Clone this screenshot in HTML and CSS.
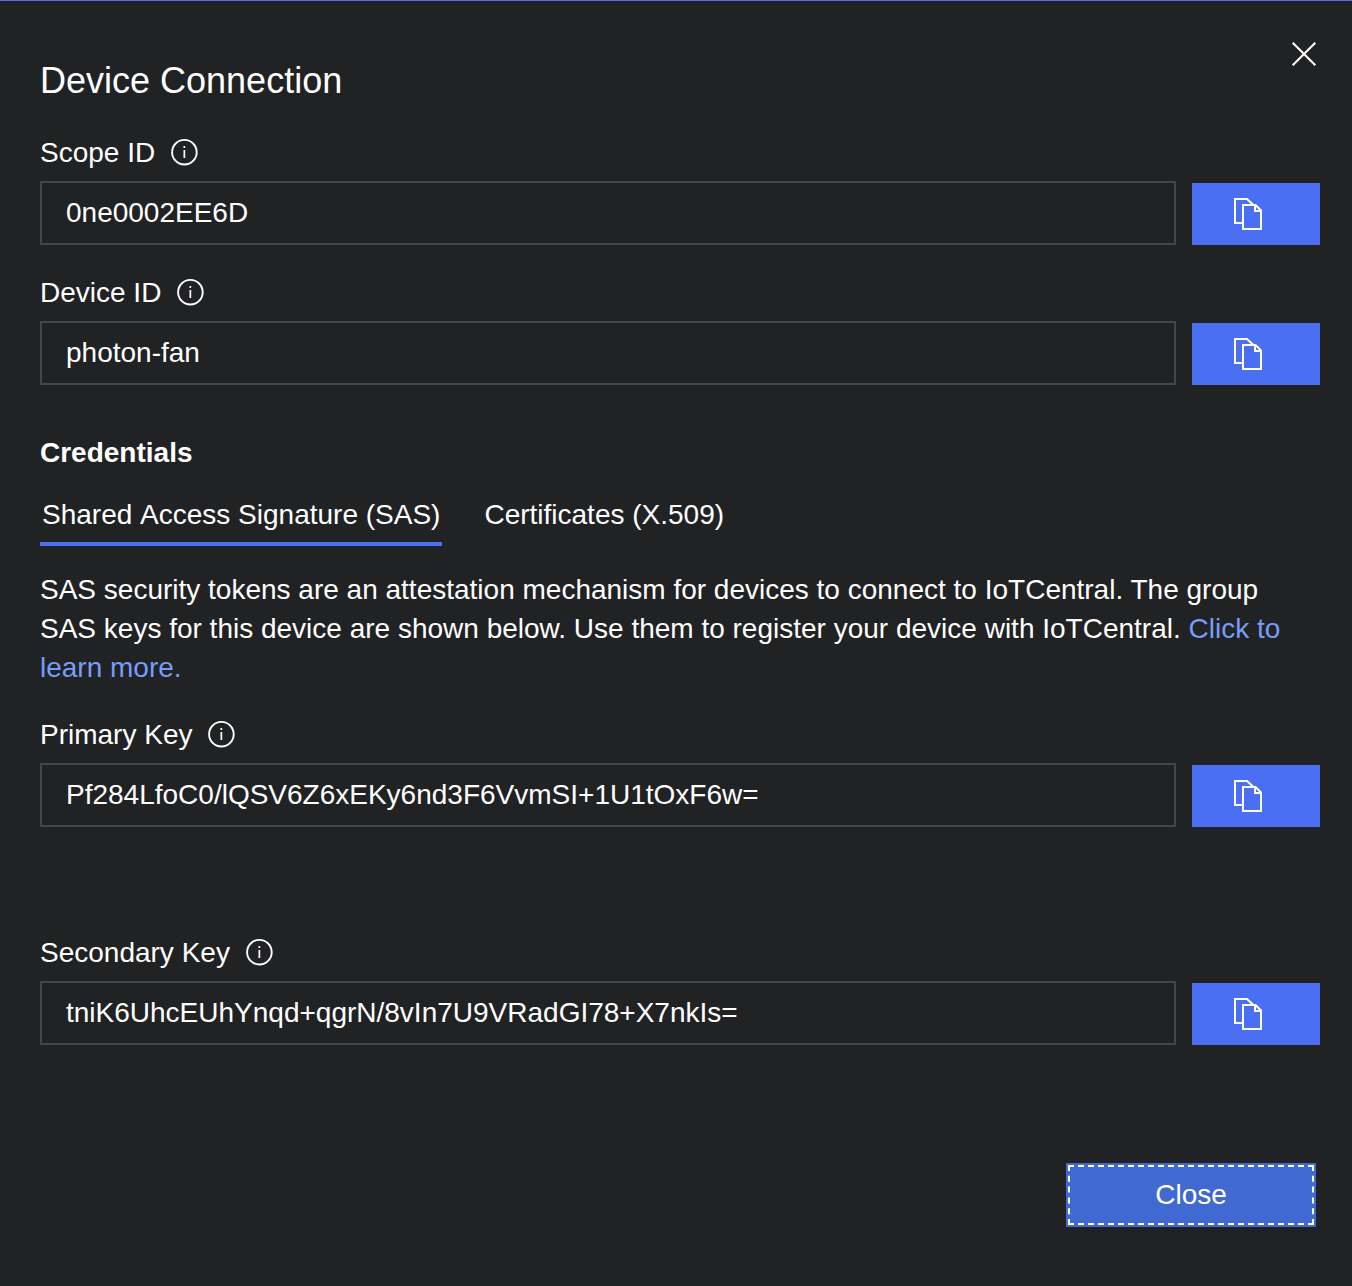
FILE: index.html
```html
<!DOCTYPE html>
<html lang="en">
<head>
<meta charset="utf-8">
<title>Device Connection</title>
<link rel="stylesheet" href="styles.css">
</head>
<body>
<svg class="sprites" aria-hidden="true">
  <symbol id="info" viewBox="0 0 28 28">
    <circle cx="13.4" cy="14.2" r="12.3" fill="none" stroke="currentColor" stroke-width="1.9"/>
    <path d="M12.500 8.100h1.700v2h-1.700zM12.500 11.900h1.700v8.200h-1.700z" fill="currentColor"/>
  </symbol>
  <symbol id="copy" viewBox="0 0 32 34">
    <path d="M10 26H3V2h12l6.500 6M11 8h12.500l5.500 5.500V32H11zM23 8v6h6" fill="none" stroke="currentColor" stroke-width="2"/>
  </symbol>
</svg>
<main class="dialog">
  <button class="dismiss" aria-label="Dismiss"><svg viewBox="0 0 26 26"><path d="M1.700 1.700l22.600 22.600M24.300 1.700L1.700 24.300" stroke="currentColor" stroke-width="2.100"/></svg></button>
  <h1 class="title">Device Connection</h1>
  <section class="field">
    <div class="label">Scope ID<svg class="info"><use href="#info"/></svg></div>
    <div class="row"><div class="value">0ne0002EE6D</div><button class="copy" aria-label="Copy"><svg><use href="#copy"/></svg></button></div>
  </section>
  <section class="field">
    <div class="label">Device ID<svg class="info"><use href="#info"/></svg></div>
    <div class="row"><div class="value">photon-fan</div><button class="copy" aria-label="Copy"><svg><use href="#copy"/></svg></button></div>
  </section>
  <h2 class="subtitle">Credentials</h2>
  <nav class="tabs">
    <div class="tab active">Shared Access Signature (SAS)</div>
    <div class="tab">Certificates (X.509)</div>
  </nav>
  <p class="description">SAS security tokens are an attestation mechanism for devices to connect to IoTCentral. The group SAS keys for this device are shown below. Use them to register your device with IoTCentral. <a class="link">Click to learn more.</a></p>
  <section class="field key">
    <div class="label">Primary Key<svg class="info"><use href="#info"/></svg></div>
    <div class="row"><div class="value">Pf284LfoC0/lQSV6Z6xEKy6nd3F6VvmSI+1U1tOxF6w=</div><button class="copy" aria-label="Copy"><svg><use href="#copy"/></svg></button></div>
  </section>
  <section class="field key">
    <div class="label">Secondary Key<svg class="info"><use href="#info"/></svg></div>
    <div class="row"><div class="value">tniK6UhcEUhYnqd+qgrN/8vIn7U9VRadGI78+X7nkIs=</div><button class="copy" aria-label="Copy"><svg><use href="#copy"/></svg></button></div>
  </section>
  <footer class="actions"><button class="close"><span class="focus">Close</span></button></footer>
</main>
</body>
</html>
```

FILE: styles.css
```css
* { box-sizing: border-box; }
body {
  margin: 0;
  background: #212224;
  color: #fff;
  font: 28px/32px "Liberation Sans", Arial, sans-serif;
}
button {
  border: 0;
  padding: 0;
  color: inherit;
  font: inherit;
}
svg { display: block; }
.sprites { position: absolute; width: 0; height: 0; }
.dialog {
  position: relative;
  height: 1286px;
  padding: 59px 32px 0 40px;
  border-top: 1px solid #4a6ff3;
}
.dismiss {
  position: absolute;
  top: 40px;
  right: 35px;
  width: 26px;
  height: 26px;
  background: none;
}
.title {
  margin: 0 0 35px;
  font-size: 36px;
  line-height: 42px;
  font-weight: 400;
}
.field { margin-bottom: 32px; }
.label {
  display: flex;
  align-items: center;
  gap: 16px;
  height: 32px;
  margin-bottom: 12px;
}
.info { width: 28px; height: 28px; margin-top: -2px; }
.row { display: flex; gap: 16px; align-items: flex-end; }
.value {
  flex: 1;
  height: 64px;
  padding: 14px 24px;
  border: 2px solid #464648;
}
.copy {
  width: 128px;
  height: 62px;
  padding-left: 40px;
  background: #4a6ff3;
}
.copy svg { width: 32px; height: 34px; }
.subtitle {
  margin: 52px 0 30px;
  font-size: 28px;
  line-height: 32px;
}
.tabs { display: flex; gap: 40px; font-kerning: none; }
.tab {
  height: 47px;
  padding: 0 2px;
  border-bottom: 4px solid transparent;
}
.active { border-color: #4a6ff3; }
.description {
  margin: 24px 0 32px;
  line-height: 39px;
}
.link { color: #769df8; }
.key { margin-bottom: 110px; }
.actions {
  display: flex;
  justify-content: flex-end;
  margin-top: 118px;
  padding-right: 4px;
}
.close {
  width: 250px;
  height: 64px;
  padding: 2px;
  background: #4169d2;
}
.focus {
  display: block;
  height: 60px;
  padding-top: 12px;
  border: 2px dashed #fff;
}
```
